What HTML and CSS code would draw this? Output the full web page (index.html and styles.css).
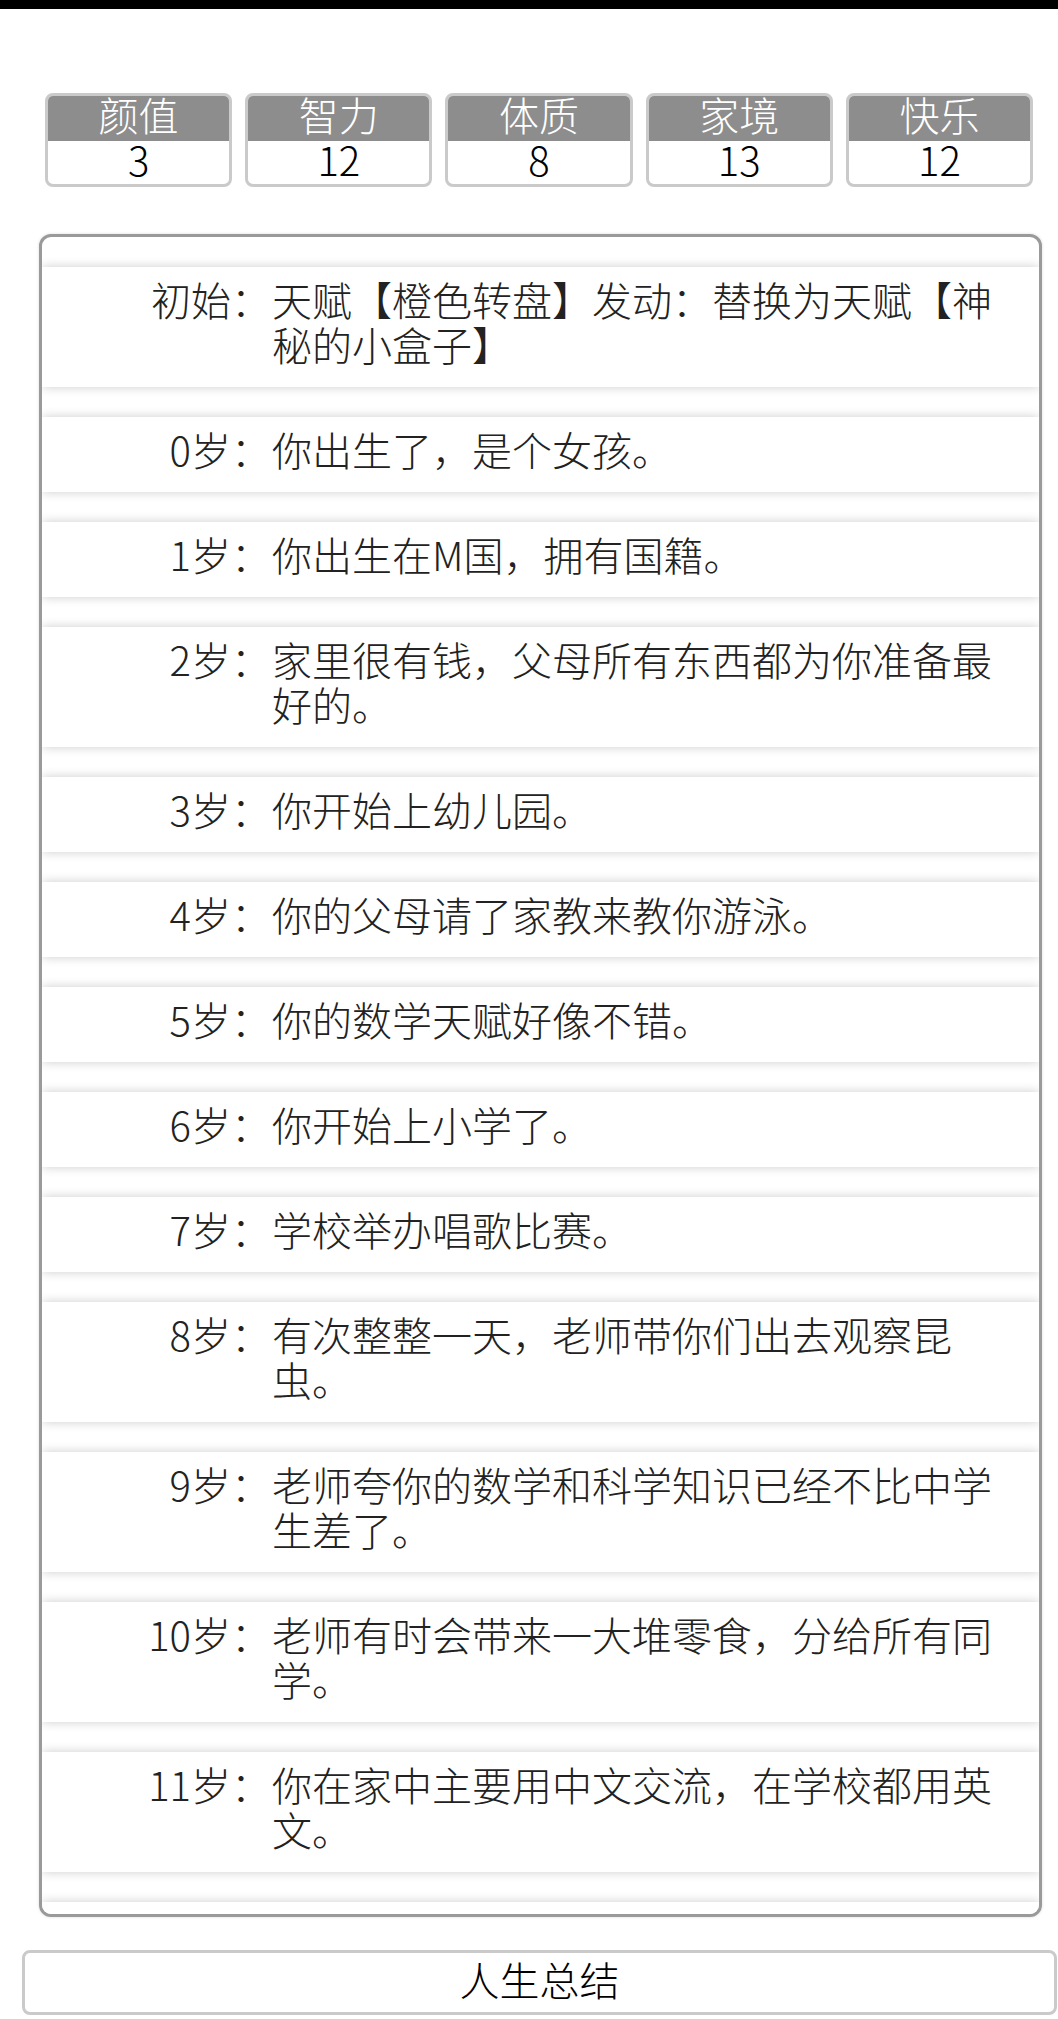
FILE: index.html
```html
<!DOCTYPE html>
<html lang="zh-CN">
<head>
<meta charset="utf-8">
<title>人生重开</title>
<link rel="stylesheet" href="styles.css">
</head>
<body>
<div class="topbar"></div>
<ul class="stats">
  <li class="stat"><div class="stat-name">颜值</div><div class="stat-value">3</div></li>
  <li class="stat"><div class="stat-name">智力</div><div class="stat-value">12</div></li>
  <li class="stat"><div class="stat-name">体质</div><div class="stat-value">8</div></li>
  <li class="stat"><div class="stat-name">家境</div><div class="stat-value">13</div></li>
  <li class="stat"><div class="stat-name">快乐</div><div class="stat-value">12</div></li>
</ul>
<ul class="log">
  <li class="entry"><span class="age">初始：</span><span class="text">天赋【橙色转盘】发动：替换为天赋【神秘的小盒子】</span></li>
  <li class="entry"><span class="age">0岁：</span><span class="text">你出生了，是个女孩。</span></li>
  <li class="entry"><span class="age">1岁：</span><span class="text">你出生在M国，拥有国籍。</span></li>
  <li class="entry"><span class="age">2岁：</span><span class="text">家里很有钱，父母所有东西都为你准备最好的。</span></li>
  <li class="entry"><span class="age">3岁：</span><span class="text">你开始上幼儿园。</span></li>
  <li class="entry"><span class="age">4岁：</span><span class="text">你的父母请了家教来教你游泳。</span></li>
  <li class="entry"><span class="age">5岁：</span><span class="text">你的数学天赋好像不错。</span></li>
  <li class="entry"><span class="age">6岁：</span><span class="text">你开始上小学了。</span></li>
  <li class="entry"><span class="age">7岁：</span><span class="text">学校举办唱歌比赛。</span></li>
  <li class="entry"><span class="age">8岁：</span><span class="text">有次整整一天，老师带你们出去观察昆虫。</span></li>
  <li class="entry"><span class="age">9岁：</span><span class="text">老师夸你的数学和科学知识已经不比中学生差了。</span></li>
  <li class="entry"><span class="age">10岁：</span><span class="text">老师有时会带来一大堆零食，分给所有同学。</span></li>
  <li class="entry"><span class="age">11岁：</span><span class="text">你在家中主要用中文交流，在学校都用英文。</span></li>
  <li class="entry"><span class="age"></span><span class="text"></span></li>
</ul>
<button class="summary" type="button">人生总结</button>
</body>
</html>
```

FILE: styles.css
```css
* {
  box-sizing: border-box;
}

html, body {
  margin: 0;
  padding: 0;
  background: #fff;
}

body {
  width: 1058px;
  font-family: "Noto Sans CJK SC", "Noto Sans", sans-serif;
  font-size: 40px;
  font-weight: 300;
  color: #222;
  overflow: hidden;
}

.topbar {
  height: 9px;
  background: #000;
}

.stats {
  list-style: none;
  margin: 84px 0 0 45px;
  padding: 0;
  width: 988px;
  display: flex;
  gap: 13px;
}

.stat {
  flex: 1;
  border: 3px solid #cacaca;
  border-radius: 8px;
  text-align: center;
  background: #fff;
}

.stat-name {
  background: #8d8d8d;
  color: #fff;
  border-radius: 5px 5px 0 0;
  height: 45px;
  line-height: 37px;
  padding-bottom: 8px;
}

.stat-value {
  color: #000;
  height: 43px;
  line-height: 37px;
  padding-bottom: 6px;
}

.log {
  list-style: none;
  margin: 47px 0 0 39px;
  padding: 30px 0 0 0;
  width: 1003px;
  height: 1683px;
  border: 3px solid #9a9a9a;
  border-radius: 12px;
  overflow: hidden;
  background: #fff;
  box-shadow: 0 0 3px rgba(0, 0, 0, 0.15);
}

.entry {
  display: flex;
  background: #fff;
  box-shadow: 0 0 10px rgba(0, 0, 0, 0.2);
  padding: 10px 40px 20px 0;
  line-height: 45px;
  margin-bottom: 30px;
  min-height: 75px;
}

.age {
  flex: none;
  width: 229px;
  text-align: right;
  white-space: nowrap;
}

.text {
  flex: 1;
  padding-left: 1px;
}

.summary {
  display: block;
  margin: 33px 0 0 22px;
  width: 1035px;
  height: 65px;
  padding: 0 0 7px 0;
  border: 3px solid #cacaca;
  border-radius: 8px;
  background: #fff;
  font-family: "Noto Sans CJK SC", "Noto Sans", sans-serif;
  font-size: 40px;
  font-weight: 300;
  line-height: 52px;
  color: #000;
  text-align: center;
}
```
